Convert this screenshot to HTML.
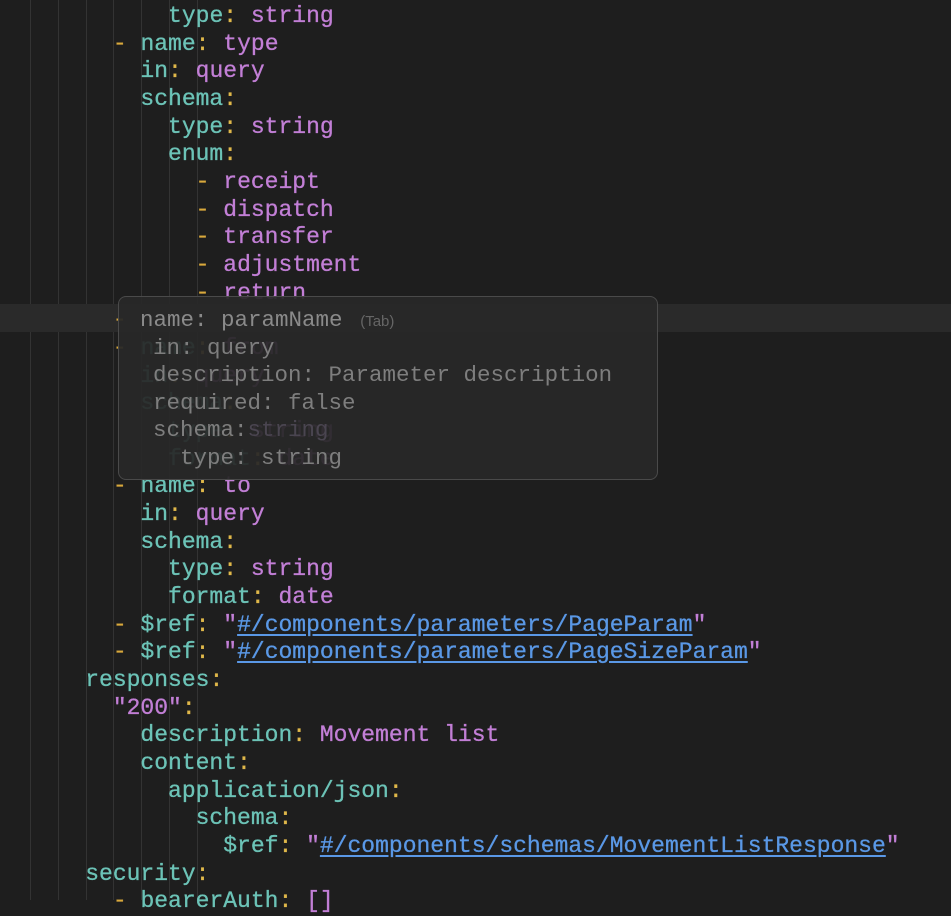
<!DOCTYPE html>
<html><head><meta charset="utf-8"><style>
html,body{margin:0;padding:0;background:#1e1e1e;width:951px;height:900px;overflow:hidden}
.ed{position:absolute;left:0;top:2px;width:951px;height:900px;font-family:"Liberation Mono",monospace;font-size:23px;}
.l{position:absolute;left:30px;height:27.7px;line-height:27.7px;white-space:pre;color:#6cc3b7;-webkit-text-stroke:0.3px currentColor}
.k{color:#6cc3b7}.c{color:#e0b84a}.s{color:#c27fd6}.d{color:#d9a93c}
.u{color:#5a98e6;text-decoration:underline;text-underline-offset:3px}
.g{position:absolute;top:-2px;width:1px;height:900px;background:#333}
.hl{position:absolute;left:0;top:302px;width:951px;height:28px;background:#2a2a2a}
.pop{position:absolute;left:118px;top:294px;width:540px;height:184px;border:1px solid #4a4a4a;border-radius:8px;background:rgba(40,40,40,0.94);box-sizing:border-box}
.p{position:absolute;white-space:pre;color:#7e7e7e;font-family:"Liberation Mono",monospace;font-size:22.5px;line-height:27.7px}
</style></head><body>
<div class="ed">
<div class="g" style="left:30px"></div><div class="g" style="left:58px"></div><div class="g" style="left:86px"></div><div class="g" style="left:113px"></div><div class="g" style="left:141px"></div><div class="g" style="left:169px"></div><div class="g" style="left:197px"></div>
<div class="hl"></div>
<div class="l" style="top:1px">          <span class="k">type</span><span class="c">:</span> <span class="s">string</span></div>
<div class="l" style="top:29px">      <span class="d">-</span> name<span class="c">:</span> <span class="s">type</span></div>
<div class="l" style="top:56px">        in<span class="c">:</span> <span class="s">query</span></div>
<div class="l" style="top:84px">        schema<span class="c">:</span></div>
<div class="l" style="top:112px">          type<span class="c">:</span> <span class="s">string</span></div>
<div class="l" style="top:139px">          enum<span class="c">:</span></div>
<div class="l" style="top:167px">            <span class="d">-</span> <span class="s">receipt</span></div>
<div class="l" style="top:195px">            <span class="d">-</span> <span class="s">dispatch</span></div>
<div class="l" style="top:222px">            <span class="d">-</span> <span class="s">transfer</span></div>
<div class="l" style="top:250px">            <span class="d">-</span> <span class="s">adjustment</span></div>
<div class="l" style="top:278px">            <span class="d">-</span> <span class="s">return</span></div>
<div class="l" style="top:305px">      <span class="d">-</span> </div>
<div class="l" style="top:333px">      <span class="d">-</span> name<span class="c">:</span> <span class="s">from</span></div>
<div class="l" style="top:361px">        in<span class="c">:</span> <span class="s">query</span></div>
<div class="l" style="top:388px">        schema<span class="c">:</span></div>
<div class="l" style="top:416px">          type<span class="c">:</span> <span class="s">string</span></div>
<div class="l" style="top:444px">          format<span class="c">:</span> <span class="s">date</span></div>
<div class="l" style="top:471px">      <span class="d">-</span> name<span class="c">:</span> <span class="s">to</span></div>
<div class="l" style="top:499px">        in<span class="c">:</span> <span class="s">query</span></div>
<div class="l" style="top:527px">        schema<span class="c">:</span></div>
<div class="l" style="top:554px">          type<span class="c">:</span> <span class="s">string</span></div>
<div class="l" style="top:582px">          format<span class="c">:</span> <span class="s">date</span></div>
<div class="l" style="top:610px">      <span class="d">-</span> $ref<span class="c">:</span> <span class="s">"</span><span class="u">#/components/parameters/PageParam</span><span class="s">"</span></div>
<div class="l" style="top:637px">      <span class="d">-</span> $ref<span class="c">:</span> <span class="s">"</span><span class="u">#/components/parameters/PageSizeParam</span><span class="s">"</span></div>
<div class="l" style="top:665px">    responses<span class="c">:</span></div>
<div class="l" style="top:693px">      <span class="s">"200"</span><span class="c">:</span></div>
<div class="l" style="top:720px">        description<span class="c">:</span> <span class="s">Movement list</span></div>
<div class="l" style="top:748px">        content<span class="c">:</span></div>
<div class="l" style="top:776px">          application/json<span class="c">:</span></div>
<div class="l" style="top:803px">            schema<span class="c">:</span></div>
<div class="l" style="top:831px">              $ref<span class="c">:</span> <span class="s">"</span><span class="u">#/components/schemas/MovementListResponse</span><span class="s">"</span></div>
<div class="l" style="top:859px">    security<span class="c">:</span></div>
<div class="l" style="top:886px">      <span class="d">-</span> bearerAuth<span class="c">:</span> <span class="s">[]</span></div>
<div class="pop"></div>
<div class="p" style="left:140px;top:305px;color:#8a8a8a">name: paramName <span style="font-family:'Liberation Sans',sans-serif;font-size:15px;color:#666"> (Tab)</span></div>
<div class="p" style="left:153px;top:333px">in: query</div>
<div class="p" style="left:153px;top:360px">description: Parameter description</div>
<div class="p" style="left:153px;top:388px">required: false</div>
<div class="p" style="left:153px;top:415px">schema:<span style="color:#4a4550">string</span></div>
<div class="p" style="left:180px;top:443px">type: string</div>
</div>
</body></html>
